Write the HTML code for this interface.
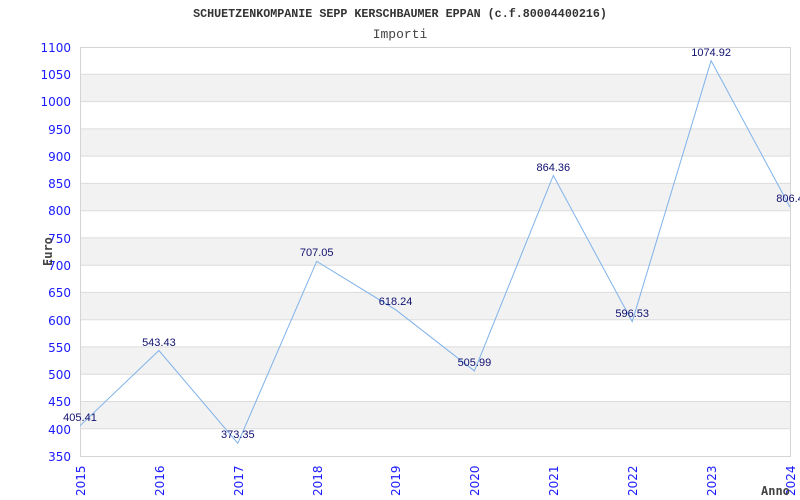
<!DOCTYPE html>
<html><head><meta charset="utf-8"><style>body{margin:0;background:#fff}svg{display:block}</style></head><body>
<svg width="800" height="500" xmlns="http://www.w3.org/2000/svg">
<rect width="800" height="500" fill="#fff"/>
<g fill="#f2f2f2">
<rect x="80" y="74.3" width="710" height="27.3"/>
<rect x="80" y="128.9" width="710" height="27.3"/>
<rect x="80" y="183.4" width="710" height="27.3"/>
<rect x="80" y="237.9" width="710" height="27.3"/>
<rect x="80" y="292.4" width="710" height="27.3"/>
<rect x="80" y="346.9" width="710" height="27.3"/>
<rect x="80" y="401.5" width="710" height="27.3"/>
</g>
<g stroke="#dcdcdc" stroke-width="1">
<line x1="80" x2="790" y1="74.3" y2="74.3"/><line x1="80" x2="790" y1="101.6" y2="101.6"/>
<line x1="80" x2="790" y1="128.9" y2="128.9"/><line x1="80" x2="790" y1="156.1" y2="156.1"/>
<line x1="80" x2="790" y1="183.4" y2="183.4"/><line x1="80" x2="790" y1="210.7" y2="210.7"/>
<line x1="80" x2="790" y1="237.9" y2="237.9"/><line x1="80" x2="790" y1="265.2" y2="265.2"/>
<line x1="80" x2="790" y1="292.4" y2="292.4"/><line x1="80" x2="790" y1="319.7" y2="319.7"/>
<line x1="80" x2="790" y1="346.9" y2="346.9"/><line x1="80" x2="790" y1="374.2" y2="374.2"/>
<line x1="80" x2="790" y1="401.5" y2="401.5"/><line x1="80" x2="790" y1="428.8" y2="428.8"/>
</g>
<rect x="80.5" y="47.5" width="710" height="409" fill="none" stroke="#d4d4d4"/>
<text x="400" y="17" text-anchor="middle" font-family="Liberation Mono, monospace" font-weight="bold" font-size="11.7" fill="#333">SCHUETZENKOMPANIE SEPP KERSCHBAUMER EPPAN (c.f.80004400216)</text>
<text x="400" y="38" text-anchor="middle" font-family="Liberation Mono, monospace" font-size="13" fill="#444">Importi</text>
<g font-family="DejaVu Sans, sans-serif" font-size="12" fill="#1a1aff" text-anchor="end">
<text x="71" y="52">1100</text><text x="71" y="79">1050</text><text x="71" y="106">1000</text>
<text x="71" y="134">950</text><text x="71" y="161">900</text><text x="71" y="188">850</text>
<text x="71" y="215">800</text><text x="71" y="243">750</text><text x="71" y="270">700</text>
<text x="71" y="297">650</text><text x="71" y="325">600</text><text x="71" y="352">550</text>
<text x="71" y="379">500</text><text x="71" y="406">450</text><text x="71" y="434">400</text>
<text x="71" y="461">350</text>
</g>
<g font-family="DejaVu Sans, sans-serif" font-size="12" fill="#1a1aff">
<text transform="translate(85,496) rotate(-90)">2015</text>
<text transform="translate(164,496) rotate(-90)">2016</text>
<text transform="translate(243,496) rotate(-90)">2017</text>
<text transform="translate(322,496) rotate(-90)">2018</text>
<text transform="translate(400,496) rotate(-90)">2019</text>
<text transform="translate(479,496) rotate(-90)">2020</text>
<text transform="translate(558,496) rotate(-90)">2021</text>
<text transform="translate(637,496) rotate(-90)">2022</text>
<text transform="translate(716,496) rotate(-90)">2023</text>
<text transform="translate(795,496) rotate(-90)">2024</text>
</g>
<text transform="translate(52,266) rotate(-90)" font-family="DejaVu Sans Mono, monospace" font-weight="bold" font-size="12" fill="#444">Euro</text>
<text x="761" y="495" font-family="DejaVu Sans Mono, monospace" font-weight="bold" font-size="12" fill="#444">Anno</text>
<polyline fill="none" stroke="#7fb2ea" stroke-width="1" points="80,425.8 158.9,350.5 237.8,443.3 316.7,261.3 395.6,309.7 474.4,370.9 553.3,175.5 632.2,321.6 711.1,60.7 790,207.1"/>
<g font-family="Liberation Sans, sans-serif" font-size="11" fill="#101070" text-anchor="middle">
<text x="80" y="421">405.41</text><text x="158.9" y="346">543.43</text>
<text x="237.8" y="438">373.35</text><text x="316.7" y="256">707.05</text>
<text x="395.6" y="305">618.24</text><text x="474.4" y="366">505.99</text>
<text x="553.3" y="171">864.36</text><text x="632.2" y="317">596.53</text>
<text x="711.1" y="56">1074.92</text><text x="790" y="202">806.4</text>
</g>
</svg>
</body></html>
